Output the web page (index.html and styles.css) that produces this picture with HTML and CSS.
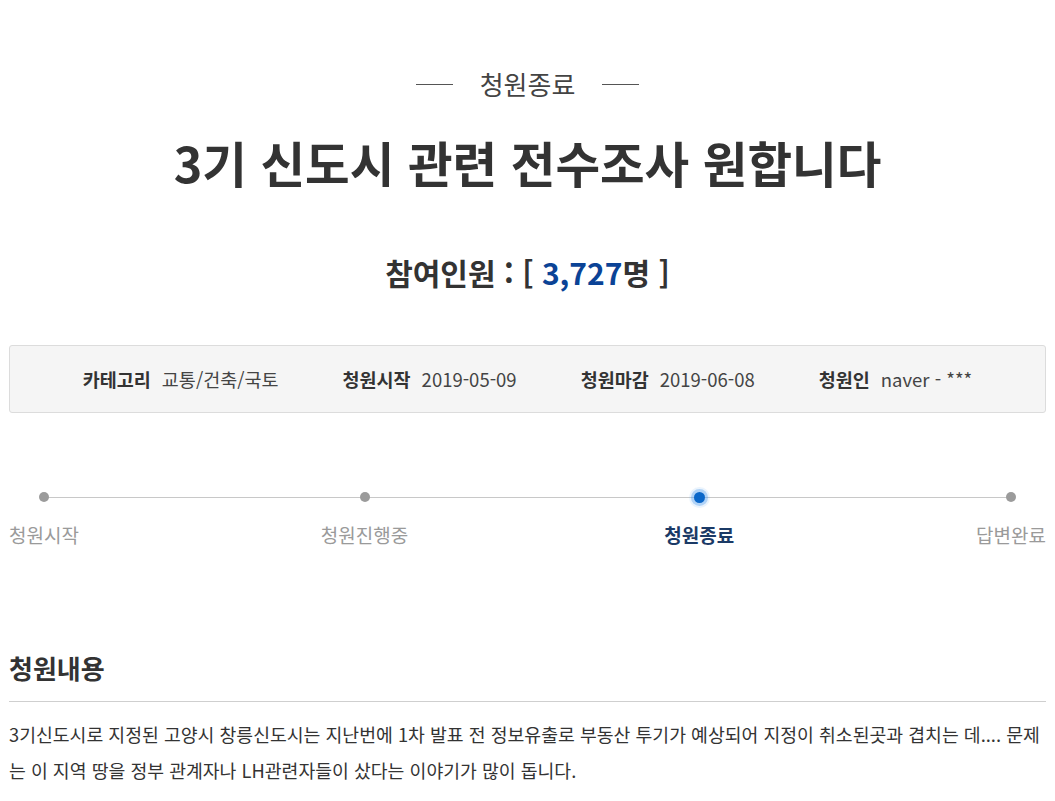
FILE: index.html
```html
<!DOCTYPE html>
<html lang="ko">
<head>
<meta charset="utf-8">
<title>청원</title>
<link rel="stylesheet" href="styles.css">
</head>
<body>
<div class="wrap">
  <div class="status"><span class="status-text">청원종료</span></div>
  <h1 class="title">3기 신도시 관련 전수조사 원합니다</h1>
  <h2 class="count">참여인원 : [ <span class="num">3,727</span>명 ]</h2>

  <ul class="info">
    <li class="info-item"><strong>카테고리</strong><span>교통/건축/국토</span></li>
    <li class="info-item"><strong>청원시작</strong><span>2019-05-09</span></li>
    <li class="info-item"><strong>청원마감</strong><span>2019-06-08</span></li>
    <li class="info-item"><strong>청원인</strong><span>naver - ***</span></li>
  </ul>

  <ol class="steps">
    <li class="step"><span class="dot"></span><span class="step-label">청원시작</span></li>
    <li class="step step-2"><span class="dot"></span><span class="step-label">청원진행중</span></li>
    <li class="step active"><span class="dot"></span><span class="step-label">청원종료</span></li>
    <li class="step"><span class="dot"></span><span class="step-label">답변완료</span></li>
  </ol>

  <h3 class="section-title">청원내용</h3>
  <p class="content">3기신도시로 지정된 고양시 창릉신도시는 지난번에 1차 발표 전 정보유출로 부동산 투기가 예상되어 지정이 취소된곳과 겹치는 데.... 문제는 이 지역 땅을 정부 관계자나 LH관련자들이 샀다는 이야기가 많이 돕니다.</p>
</div>
</body>
</html>
```

FILE: styles.css
```css
* { box-sizing: border-box; }
html, body { margin: 0; padding: 0; background: #fff; }
body {
  font-family: "Noto Sans CJK KR", "Noto Sans", sans-serif;
  color: #333;
}
.wrap {
  max-width: 1037px;
  margin: 0 auto;
}
.status {
  margin: 66px 0 0;
  display: flex;
  justify-content: center;
  align-items: center;
  gap: 27px;
  font-size: 26px;
  line-height: 36px;
  color: #444;
}
.status::before,
.status::after {
  content: "";
  width: 37px;
  height: 1px;
  background: #555;
}
.title {
  margin: 30px 0 0;
  text-align: center;
  font-size: 48.5px;
  line-height: 60px;
  font-weight: 700;
  color: #333;
}
.count {
  margin: 60px 0 0;
  text-align: center;
  font-size: 30px;
  line-height: 40px;
  font-weight: 700;
  color: #333;
}
.count .num { color: #0b4396; }
.info {
  list-style: none;
  margin: 53px 0 0;
  padding: 0;
  height: 68px;
  display: flex;
  justify-content: center;
  align-items: center;
  gap: 64px;
  background: #f5f5f5;
  border: 1px solid #dcdcdc;
  border-radius: 3px;
  font-size: 18.5px;
}
.info-item { display: flex; gap: 11px; align-items: center; }
.info-item strong { font-weight: 700; color: #333; }
.info-item span { color: #444; }

.steps {
  list-style: none;
  margin: 74px 0 0;
  padding: 0;
  display: flex;
  justify-content: space-between;
  position: relative;
}
.steps::before {
  content: "";
  position: absolute;
  left: 34px;
  right: 35px;
  top: 10px;
  height: 1px;
  background: #c8c8c8;
}
.step {
  display: flex;
  flex-direction: column;
  align-items: center;
  position: relative;
}
.step-2 { margin-right: 14px; }
.dot {
  width: 20px;
  height: 20px;
  display: flex;
  align-items: center;
  justify-content: center;
}
.dot::after {
  content: "";
  width: 10px;
  height: 10px;
  border-radius: 50%;
  background: #9b9b9b;
}
.active .dot::after {
  width: 11px;
  height: 11px;
  background: #0b67c9;
  box-shadow: 0 0 0 3px rgba(70, 150, 235, 0.35), 0 0 0 5px rgba(120, 180, 240, 0.15);
}
.step-label {
  margin-top: 16px;
  font-size: 19px;
  line-height: 24px;
  color: #9a9a9a;
}
.active .step-label { color: #1b3a66; font-weight: 700; }

.section-title {
  margin: 104px 0 0;
  padding-bottom: 16px;
  border-bottom: 1px solid #cfcfcf;
  font-size: 26px;
  line-height: 34px;
  font-weight: 700;
  color: #333;
}
.content {
  margin: 14px 0 0;
  font-size: 18.3px;
  line-height: 36px;
  color: #333;
}
```
